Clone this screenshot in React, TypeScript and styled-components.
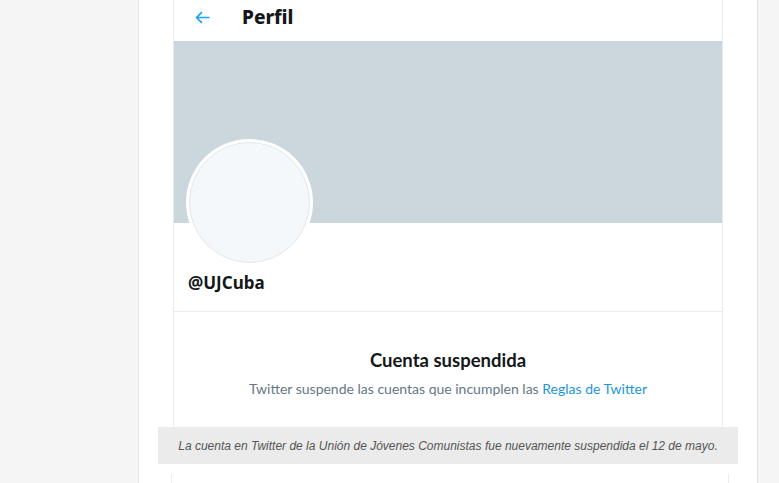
import React from "react";
import styled, { createGlobalStyle } from "styled-components";

const GlobalStyle = createGlobalStyle`
  html, body {
    margin: 0;
    padding: 0;
    background: #f5f5f5;
  }
  body {
    font-family: "Noto Sans", "Open Sans", sans-serif;
  }
`;

const Page = styled.div`
  display: flex;
  flex-flow: row nowrap;
  height: 483px;
  overflow: hidden;
`;

const Gutter = styled.div<{ $side: "left" | "right" }>`
  background: #f5f5f5;
  flex: ${({ $side }) => ($side === "left" ? "0 0 138px" : "1 1 auto")};
  border-right: ${({ $side }) => ($side === "left" ? "1px solid #e8e8e8" : "none")};
  border-left: ${({ $side }) => ($side === "right" ? "1px solid #e0e0e0" : "none")};
`;

const Column = styled.main`
  flex: 0 0 618px;
  background: #fff;
  display: flex;
  flex-direction: column;
`;

const Card = styled.section`
  margin-left: 34px;
  width: 548px;
  border-left: 1px solid #e6ecf0;
  border-right: 1px solid #e6ecf0;
  display: flex;
  flex-direction: column;
`;

const Header = styled.header`
  height: 41px;
  display: flex;
  align-items: center;
  gap: 31px;
  padding: 0 0 7px 20px;
  box-sizing: border-box;
`;

const BackButton = styled.button`
  border: 0;
  background: none;
  padding: 0;
  width: 17px;
  height: 17px;
  display: flex;
  align-items: center;
  justify-content: center;
  cursor: pointer;
`;

const Title = styled.h1`
  margin: 0;
  font-size: 19px;
  font-weight: 800;
  color: #14171a;
  line-height: 24px;
`;

const Banner = styled.div`
  height: 182px;
  background: #ccd6dd;
`;

const Profile = styled.div`
  padding: 0 14px 17px 12px;
  border-bottom: 1px solid #e6ecf0;
  display: flex;
  flex-direction: column;
`;

const Avatar = styled.div`
  width: 127px;
  height: 127px;
  margin-top: -84px;
  border-radius: 50%;
  background: #fff;
  padding: 3px;
  box-sizing: border-box;
`;

const AvatarFill = styled.div`
  width: 100%;
  height: 100%;
  border-radius: 50%;
  background: #f5f8fa;
  border: 1px solid #e1e8ed;
  box-sizing: border-box;
`;

const Handle = styled.div`
  margin: 6px 0 0 2px;
  font-size: 17px;
  font-weight: 700;
  line-height: 22px;
  color: #14171a;
`;

const Suspended = styled.div`
  padding: 36px 20px 28px;
  display: flex;
  flex-direction: column;
  align-items: center;
  gap: 7px;
  font-family: Lato, "Noto Sans", sans-serif;
`;

const SuspendedTitle = styled.h2`
  margin: 0;
  font-size: 18.5px;
  font-weight: 700;
  line-height: 24px;
  color: #14171a;
`;

const SuspendedText = styled.p`
  margin: 0;
  font-size: 14px;
  line-height: 20px;
  color: #657786;
`;

const RulesLink = styled.a`
  color: #1b95e0;
  text-decoration: none;
`;

const Caption = styled.figcaption`
  margin-left: 19px;
  width: 580px;
  height: 37px;
  background: #ebebeb;
  display: flex;
  align-items: center;
  justify-content: center;
  font-family: "Liberation Sans", Arial, sans-serif;
  font-style: italic;
  font-size: 12px;
  color: #555;
`;

const NextCard = styled.div`
  margin: 10px 0 0 32px;
  width: 556px;
  flex: 1;
  border-left: 1px solid #e6ecf0;
  border-right: 1px solid #e6ecf0;
`;

const ArrowIcon = () => (
  <svg width="17" height="17" viewBox="0 0 24 24" fill="none">
    <path
      d="M21 12H4M10.5 5L3.5 12l7 7"
      stroke="#1da1f2"
      strokeWidth="2.4"
      strokeLinecap="round"
      strokeLinejoin="round"
    />
  </svg>
);

export default function App() {
  return (
    <>
      <GlobalStyle />
      <Page>
        <Gutter $side="left" />
        <Column>
          <Card>
            <Header>
              <BackButton aria-label="Atrás">
                <ArrowIcon />
              </BackButton>
              <Title>Perfil</Title>
            </Header>
            <Banner />
            <Profile>
              <Avatar>
                <AvatarFill />
              </Avatar>
              <Handle>@UJCuba</Handle>
            </Profile>
            <Suspended>
              <SuspendedTitle>Cuenta suspendida</SuspendedTitle>
              <SuspendedText>
                Twitter suspende las cuentas que incumplen las{" "}
                <RulesLink href="#">Reglas de Twitter</RulesLink>
              </SuspendedText>
            </Suspended>
          </Card>
          <Caption>
            La cuenta en Twitter de la Unión de Jóvenes Comunistas fue nuevamente suspendida el 12 de mayo.
          </Caption>
          <NextCard />
        </Column>
        <Gutter $side="right" />
      </Page>
    </>
  );
}
